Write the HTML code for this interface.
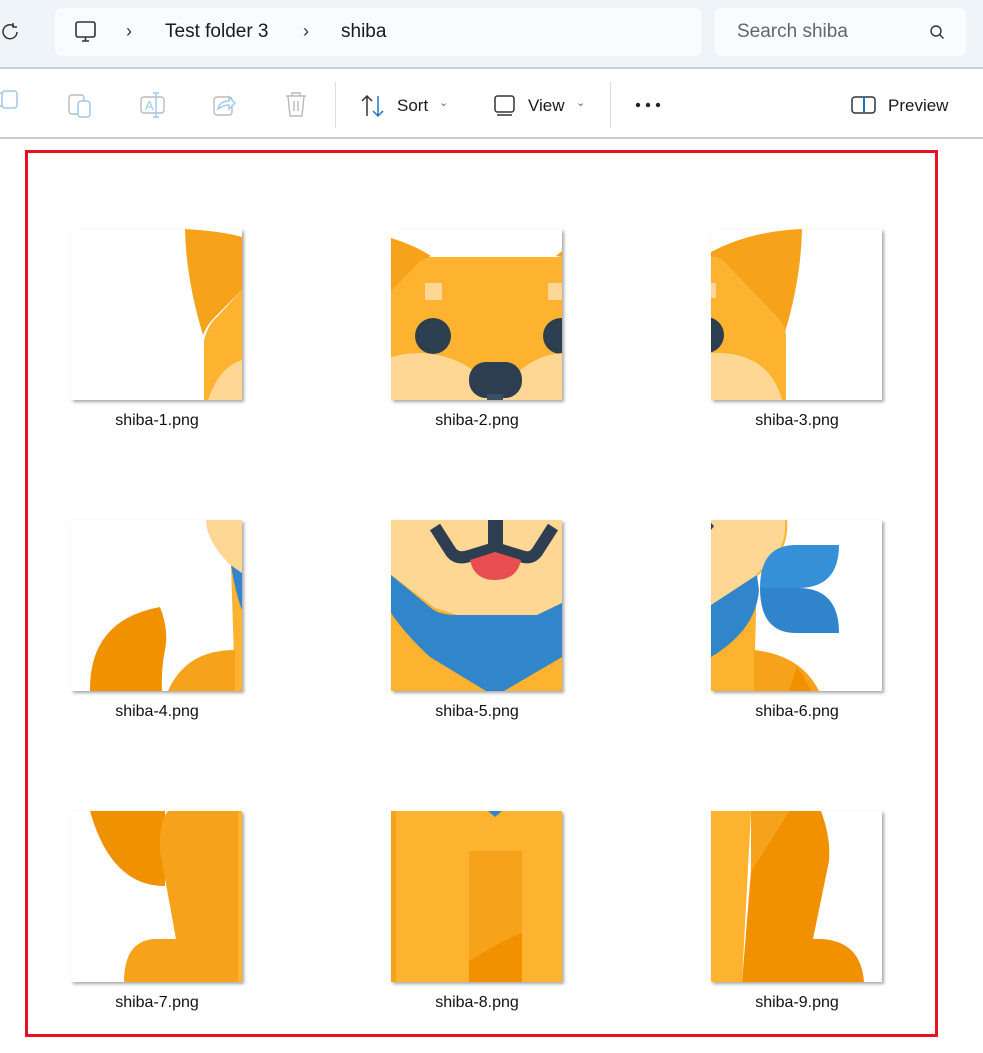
<!DOCTYPE html>
<html><head><meta charset="utf-8"><style>
*{margin:0;padding:0;box-sizing:border-box}
body{width:983px;height:1053px;background:#fff;font-family:"Liberation Sans",sans-serif;position:relative;overflow:hidden;color:#1a1a1a}
.top{position:absolute;left:0;top:0;width:983px;height:67px;background:#eff4f9}
.sep1{position:absolute;left:0;top:67px;width:983px;height:2px;background:#c3cfdb}
.sep2{position:absolute;left:0;top:137px;width:983px;height:2px;background:#c3cfdb}
.addr{position:absolute;left:55px;top:8px;width:646px;height:48px;background:#f9fbfd;border-radius:6px}
.search{position:absolute;left:715px;top:8px;width:251px;height:48px;background:#f9fbfd;border-radius:6px}
.t{position:absolute;white-space:nowrap}
.tile{position:absolute;width:171px;height:171px;box-shadow:2px 2px 3px rgba(0,0,0,.35);background:#fff;overflow:hidden}
.lbl{position:absolute;width:200px;text-align:center;font-size:16px;color:#111}
.red{position:absolute;left:25px;top:150px;width:913px;height:887px;border:3px solid #e81123}
</style></head><body>
<div class="top"></div>
<div class="addr"></div><div class="search"></div>
<svg class="t" style="left:0;top:20px" width="20" height="24" viewBox="0 0 20 24"><path d="M17 12a7 7 0 1 1-3-6" fill="none" stroke="#333" stroke-width="1.5"/><path d="M13 3v4h4" fill="none" stroke="#333" stroke-width="1.5"/></svg>
<svg class="t" style="left:74px;top:20px" width="24" height="24" viewBox="0 0 24 24"><rect x="2" y="2" width="19" height="15" rx="2" fill="none" stroke="#333" stroke-width="1.6"/><path d="M8 21h7M11.5 17v4" stroke="#333" stroke-width="1.6"/></svg>
<div class="t" style="left:126px;top:21px;font-size:18px;color:#333">›</div>
<div class="t" style="left:165px;top:21px;font-size:19px">Test folder 3</div>
<div class="t" style="left:303px;top:21px;font-size:18px;color:#333">›</div>
<div class="t" style="left:341px;top:21px;font-size:19px">shiba</div>
<div class="t" style="left:737px;top:21px;font-size:19px;color:#666">Search shiba</div>
<svg class="t" style="left:928px;top:24px" width="18" height="18" viewBox="0 0 18 18"><circle cx="8" cy="7" r="5" fill="none" stroke="#333" stroke-width="1.4"/><path d="M11.5 10.5l4 4" stroke="#333" stroke-width="1.4"/></svg>
<div class="sep1"></div>
<svg class="t" style="left:0;top:90px" width="320" height="30" viewBox="0 0 320 30">
<rect x="-8" y="3" width="14" height="13" rx="3" fill="none" stroke="#bbb" stroke-width="1.4"/><rect x="2" y="1" width="15" height="17" rx="3" fill="#fff" stroke="#9cc8ef" stroke-width="1.5"/>
<rect x="69" y="5" width="15" height="19" rx="3" fill="none" stroke="#bbb" stroke-width="1.4"/><rect x="78" y="11" width="12" height="16" rx="3" fill="#fff" stroke="#9cc8ef" stroke-width="1.5"/>
<rect x="141" y="7" width="23" height="16" rx="3" fill="none" stroke="#bbb" stroke-width="1.4"/><text x="145" y="20" font-size="13" fill="#9cc8ef" font-family="Liberation Sans">A</text><path d="M156 3v24M153 3h6M153 27h6" stroke="#9cc8ef" stroke-width="1.4"/>
<rect x="214" y="7" width="18" height="18" rx="3" fill="none" stroke="#bbb" stroke-width="1.4"/><path d="M218 19c1-6 6-8 11-8v-4l6 6-6 6v-4c-5 0-8 2-11 4z" fill="#fff" stroke="#9cc8ef" stroke-width="1.4"/>
<path d="M286 6h20M292 6v-3h8v3M288 6l2 20h12l2-20M294 11v10M298 11v10" fill="none" stroke="#bbb" stroke-width="1.4"/>
</svg>
<div class="t" style="left:335px;top:82px;width:1px;height:46px;background:#ddd"></div>
<svg class="t" style="left:360px;top:94px" width="26" height="24" viewBox="0 0 26 24"><path d="M7 22V2M2 7l5-5 5 5" fill="none" stroke="#333" stroke-width="1.5"/><path d="M18 2v20M13 17l5 5 5-5" fill="none" stroke="#1b74c8" stroke-width="1.5"/></svg>
<div class="t" style="left:397px;top:96px;font-size:17px">Sort</div>
<div class="t" style="left:439px;top:96px;font-size:11px;color:#666">⌄</div>
<svg class="t" style="left:493px;top:94px" width="24" height="24" viewBox="0 0 24 24"><rect x="2" y="2" width="19" height="16" rx="2.5" fill="none" stroke="#333" stroke-width="1.5"/><path d="M4 21h15" stroke="#333" stroke-width="1.5"/></svg>
<div class="t" style="left:528px;top:96px;font-size:17px">View</div>
<div class="t" style="left:576px;top:96px;font-size:11px;color:#666">⌄</div>
<div class="t" style="left:610px;top:82px;width:1px;height:46px;background:#ddd"></div>
<svg class="t" style="left:635px;top:100px" width="28" height="10"><circle cx="3" cy="5" r="2.2" fill="#222"/><circle cx="13" cy="5" r="2.2" fill="#222"/><circle cx="23" cy="5" r="2.2" fill="#222"/></svg>
<svg class="t" style="left:851px;top:95px" width="26" height="22" viewBox="0 0 26 22"><rect x="1" y="2" width="23" height="16" rx="3" fill="none" stroke="#333" stroke-width="1.5"/><path d="M13 2v16" stroke="#1b74c8" stroke-width="2"/></svg>
<div class="t" style="left:888px;top:96px;font-size:17px">Preview</div>
<div class="sep2"></div>

<div class="red"></div>

<!-- Row 1 -->
<svg class="tile" style="left:71px;top:229px" viewBox="0 0 171 171">
<path d="M133 171V111Q138 94 146 88L171 61V171Z" fill="#fdb32f"/>
<path d="M114 0Q150 2 171 8V61L146 86Q136 95 132 106Q115 50 114 0Z" fill="#f6a21a"/>
<path d="M137 171Q148 138 171 131V171Z" fill="#fdd793"/>
</svg>
<svg class="tile" style="left:391px;top:229px" viewBox="0 0 171 171">
<rect x="0" y="28" width="171" height="143" fill="#fdb32f"/>
<path d="M0 9Q25 17 40 27L28 33L0 62Z" fill="#f6a21a"/>
<path d="M165 27L171 22V28Z" fill="#f6a21a"/>
<rect x="34" y="54" width="17" height="17" fill="#fdd793"/><rect x="157" y="54" width="14" height="17" fill="#fdd793"/>
<circle cx="42" cy="107" r="18" fill="#2d3e50"/><circle cx="170" cy="107" r="18" fill="#2d3e50"/>
<ellipse cx="28" cy="200" rx="85" ry="76" fill="#fdd793"/><ellipse cx="175" cy="200" rx="72" ry="76" fill="#fdd793"/>
<rect x="78" y="133" width="53" height="36" rx="17" fill="#2d3e50"/><rect x="96" y="165" width="16" height="6" fill="#3b4f63"/>
</svg>
<svg class="tile" style="left:711px;top:229px" viewBox="0 0 171 171">
<path d="M0 23Q40 2 91 0Q90 50 74 103Q70 92 64 86L12 32Q7 28 0 28Z" fill="#f6a21a"/>
<path d="M0 28Q7 28 12 32L64 86Q75 96 75 108V171H0Z" fill="#fdb32f"/>
<rect x="0" y="54" width="5" height="15" fill="#fdd793"/>
<circle cx="-5" cy="106" r="18" fill="#2d3e50"/>
<path d="M0 124Q58 122 71 171H0Z" fill="#fdd793"/>
</svg>
<div class="lbl" style="left:57px;top:412px">shiba-1.png</div>
<div class="lbl" style="left:377px;top:412px">shiba-2.png</div>
<div class="lbl" style="left:697px;top:412px">shiba-3.png</div>

<!-- Row 2 -->
<svg class="tile" style="left:71px;top:520px" viewBox="0 0 171 171">
<path d="M160 45L171 53V171H164Z" fill="#fdb32f"/>
<path d="M160 45Q165 75 171 90V53Z" fill="#3186cb"/>
<path d="M135 0H171V53L158 44Q135 20 135 0Z" fill="#fdd793"/>
<path d="M19 171Q18 100 89 87Q98 110 94 130Q90 150 91 171Z" fill="#f09200"/>
<path d="M97 171Q115 130 164 130V171Z" fill="#f6a21a"/>
</svg>
<svg class="tile" style="left:391px;top:520px" viewBox="0 0 171 171">
<rect width="171" height="171" fill="#fdb32f"/>
<path d="M0 0H171V83L146 95H66L44 88L0 55Z" fill="#fdd793"/>
<path d="M0 55L40 88Q48 95 66 95H146L171 83V137L113 171H95L39 137Q15 115 0 93Z" fill="#3186cb"/>
<path d="M44 7L60 32Q66 40 78 36L104 28L130 36Q140 40 146 32L162 7" fill="none" stroke="#2d3e50" stroke-width="12" stroke-linejoin="round"/>
<rect x="97" y="0" width="15" height="30" fill="#2d3e50"/>
<path d="M79 40L104 32L130 40Q126 60 104 60Q83 60 79 40Z" fill="#e84e4f"/>
</svg>
<svg class="tile" style="left:711px;top:520px" viewBox="0 0 171 171">
<path d="M0 80L46 53L43 171H0Z" fill="#fdb32f"/>
<path d="M0 0H75Q77 25 62 40L46 55L0 85Z" fill="#fdd793"/>
<path d="M75 0Q77 25 62 40L46 55" fill="none" stroke="#fdb32f" stroke-width="2"/>
<path d="M0 85L46 55L48 70Q45 110 0 137Z" fill="#3186cb"/>
<path d="M0 3L3 6L0 10Z" fill="#2d3e50"/>
<path d="M43 130Q90 135 108 171H43Z" fill="#f6a21a"/>
<path d="M86 147Q94 158 100 171H78Z" fill="#f29100"/>
<path d="M49 68Q49 25 85 25H128Q128 68 87 68Z" fill="#3590d8"/>
<path d="M49 68H87Q128 68 128 113H85Q49 113 49 68Z" fill="#2f84cc"/>
</svg>
<div class="lbl" style="left:57px;top:703px">shiba-4.png</div>
<div class="lbl" style="left:377px;top:703px">shiba-5.png</div>
<div class="lbl" style="left:697px;top:703px">shiba-6.png</div>

<!-- Row 3 -->
<svg class="tile" style="left:71px;top:811px" viewBox="0 0 171 171">
<path d="M19 0H94L94 75Q40 75 19 0Z" fill="#f09200"/>
<path d="M97 0H171V171H53Q53 130 83 128H105L89 40Q88 10 97 0Z" fill="#f6a21a"/>
<rect x="167" y="0" width="4" height="171" fill="#fdb32f"/>
</svg>
<svg class="tile" style="left:391px;top:811px" viewBox="0 0 171 171">
<rect width="171" height="171" fill="#fdb32f"/>
<rect x="0" width="5" height="171" fill="#f6a21a"/>
<rect x="78" y="40" width="53" height="131" fill="#f6a21a"/>
<path d="M78 150Q110 130 131 122V171H78Z" fill="#f29100"/>
<path d="M97 0H111L104 6Z" fill="#3186cb"/>
</svg>
<svg class="tile" style="left:711px;top:811px" viewBox="0 0 171 171">
<path d="M0 0H40L31 171H0Z" fill="#fdb32f"/>
<path d="M40 0H78L40 60Z" fill="#f6a21a"/>
<path d="M78 0H110Q120 27 118 50L102 128H110Q150 130 153 171H31L40 60Z" fill="#f29100"/>
</svg>
<div class="lbl" style="left:57px;top:994px">shiba-7.png</div>
<div class="lbl" style="left:377px;top:994px">shiba-8.png</div>
<div class="lbl" style="left:697px;top:994px">shiba-9.png</div>
</body></html>
